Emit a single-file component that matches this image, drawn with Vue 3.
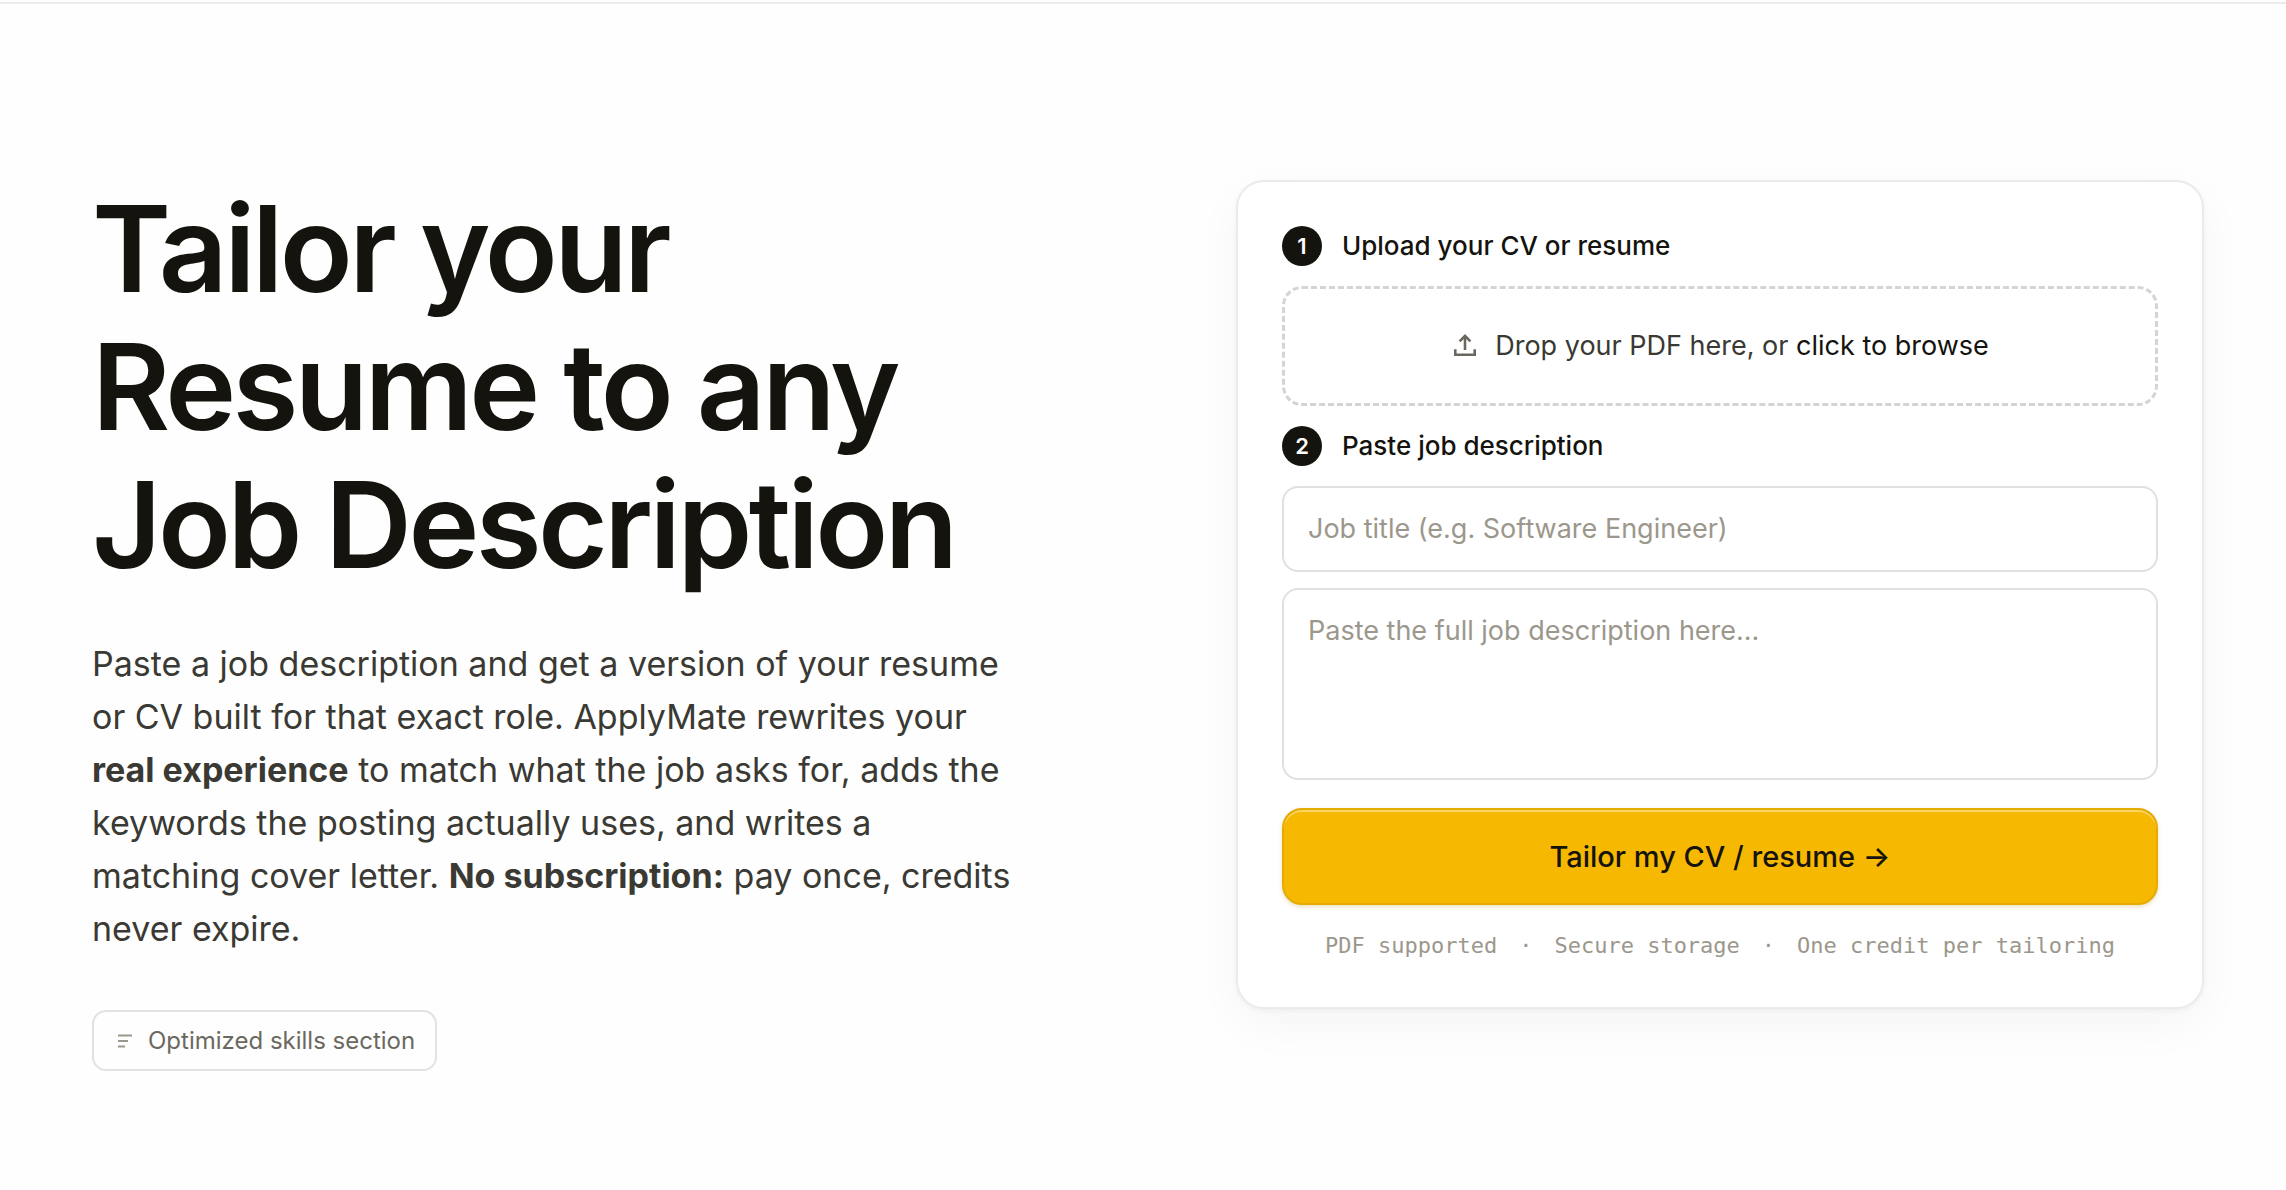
<template>
  <main class="page">
    <section class="hero">
      <div class="intro">
        <h1 class="hero-title">Tailor your Resume to any Job Description</h1>
        <p class="hero-text">
          Paste a job description and get a version of your resume or CV built for that exact role.
          ApplyMate rewrites your <strong>real experience</strong> to match what the job asks for,
          adds the keywords the posting actually uses, and writes a matching cover letter.
          <strong>No subscription:</strong> pay once, credits never expire.
        </p>
        <div class="chip">
          <svg class="chip-icon" viewBox="0 0 22 22" aria-hidden="true">
            <path d="M4 5.5h14M4 11h10M4 16.5h7" />
          </svg>
          <span>Optimized skills section</span>
        </div>
      </div>

      <form class="card" @submit.prevent="onSubmit">
        <!-- 1) CV upload -->
        <label class="step" for="cv-file">
          <span class="step-number">1</span>
          <span>Upload your CV or resume</span>
        </label>
        <label class="dropzone" @dragover.prevent @drop.prevent="onDrop">
          <input id="cv-file" class="file-input" type="file" accept="application/pdf" @change="onFile" />
          <svg class="upload-icon" viewBox="0 0 28 28" aria-hidden="true">
            <path d="M4.3 17.3v5.4h19.4v-5.4" />
            <path d="M14 18V4M8.6 9.3L14 3.9l5.4 5.4" />
          </svg>
          <span v-if="fileName">{{ fileName }}</span>
          <span v-else>Drop your PDF here, or <span class="browse">click to browse</span></span>
        </label>

        <!-- 2) Job details -->
        <label class="step" for="job-description">
          <span class="step-number">2</span>
          <span>Paste job description</span>
        </label>
        <div class="fields">
          <input
            v-model="jobTitle"
            class="field"
            type="text"
            aria-label="Job title"
            placeholder="Job title (e.g. Software Engineer)"
          />
          <textarea
            id="job-description"
            v-model="jobDescription"
            class="field field-area"
            placeholder="Paste the full job description here..."
          ></textarea>
        </div>

        <button class="submit" type="submit">Tailor my CV / resume →</button>

        <p class="notes">
          <template v-for="(note, i) in notes" :key="note">
            <span v-if="i > 0">·</span>
            <span>{{ note }}</span>
          </template>
        </p>
      </form>
    </section>
  </main>
</template>

<script setup>
import { ref } from 'vue'

const emit = defineEmits(['submit'])

const notes = ['PDF supported', 'Secure storage', 'One credit per tailoring']

const file = ref(null)
const fileName = ref('')
const jobTitle = ref('')
const jobDescription = ref('')

function setFile(f) {
  if (!f) return
  file.value = f
  fileName.value = f.name
}

function onFile(e) {
  setFile(e.target.files[0])
}

function onDrop(e) {
  setFile(e.dataTransfer.files[0])
}

function onSubmit() {
  emit('submit', {
    file: file.value,
    title: jobTitle.value,
    description: jobDescription.value
  })
}
</script>

<style>
body {
  background: #fefefe;
}
</style>

<style scoped>
.page {
  margin-top: 2px;
  border-top: 2px solid #ebebeb;
  font-family: Inter, "Liberation Sans", sans-serif;
  color: #14130e;
}
.hero {
  display: grid;
  grid-template-columns: 1fr 1fr;
  gap: 176px;
  align-items: start;
  padding: 176px 82px 112px 92px;
}
.hero-title {
  margin: 0;
  font-size: 120px;
  font-weight: 600;
  line-height: 138px;
  letter-spacing: -0.03em;
}
.hero-text {
  max-width: 928px;
  margin: 43px 0 55px;
  font-size: 34px;
  line-height: 53px;
  color: #3a3933;
}
.hero-text strong {
  font-weight: 700;
}
.chip {
  display: inline-flex;
  align-items: center;
  gap: 12px;
  padding: 14px 20px;
  border: 2px solid #e2e2e2;
  border-radius: 14px;
  font-size: 24px;
  line-height: 29px;
  color: #6b6860;
}
.chip-icon {
  width: 22px;
  height: 22px;
  fill: none;
  stroke: #9c978c;
  stroke-width: 2;
}
.card {
  padding: 44px;
  background: #fff;
  border: 2px solid #ebebeb;
  border-radius: 28px;
  box-shadow: 0 2px 4px rgba(0, 0, 0, 0.04), 0 16px 48px rgba(0, 0, 0, 0.04);
}
.step {
  display: flex;
  align-items: center;
  gap: 20px;
  margin-bottom: 20px;
  font-size: 26px;
  font-weight: 500;
  line-height: 40px;
}
.step-number {
  width: 40px;
  height: 40px;
  border-radius: 50%;
  background: #14130e;
  color: #fff;
  font-size: 22px;
  font-weight: 600;
  text-align: center;
}
.dropzone {
  display: flex;
  align-items: center;
  justify-content: center;
  gap: 16px;
  margin-bottom: 20px;
  padding: 37px 24px;
  border: 3px dashed #d4d4d4;
  border-radius: 20px;
  font-size: 27px;
  line-height: 40px;
  color: #3a3933;
  cursor: pointer;
}
.dropzone:focus-within {
  border-color: #14130e;
}
.file-input {
  position: absolute;
  width: 1px;
  height: 1px;
  opacity: 0;
}
.upload-icon {
  width: 28px;
  height: 28px;
  fill: none;
  stroke: #6b6860;
  stroke-width: 2.6;
}
.browse {
  color: #14130e;
}
.fields {
  display: flex;
  flex-direction: column;
  gap: 16px;
  margin-bottom: 28px;
}
.field {
  box-sizing: border-box;
  width: 100%;
  padding: 21px 24px;
  border: 2px solid #e0e0e0;
  border-radius: 16px;
  background: #fff;
  color: #14130e;
  font-family: inherit;
  font-size: 27px;
  line-height: 40px;
}
.field::placeholder {
  color: #9c978c;
}
.field:focus {
  outline: none;
  border-color: #14130e;
}
.field-area {
  height: 192px;
  resize: none;
}
.submit {
  width: 100%;
  padding: 26px;
  border: 2px solid #e5ab00;
  border-radius: 20px;
  background: #f6b800;
  box-shadow: inset 0 2px 0 rgba(255, 255, 255, 0.4), 0 2px 4px rgba(180, 130, 0, 0.25);
  color: #14130e;
  font-family: inherit;
  font-size: 29px;
  font-weight: 500;
  line-height: 41px;
  cursor: pointer;
}
.submit:hover {
  background: #ffc21a;
}
.notes {
  display: flex;
  justify-content: center;
  gap: 22px;
  margin: 24px 0 0;
  font-family: "DejaVu Sans Mono", monospace;
  font-size: 22px;
  line-height: 34px;
  color: #9c978c;
}
</style>
